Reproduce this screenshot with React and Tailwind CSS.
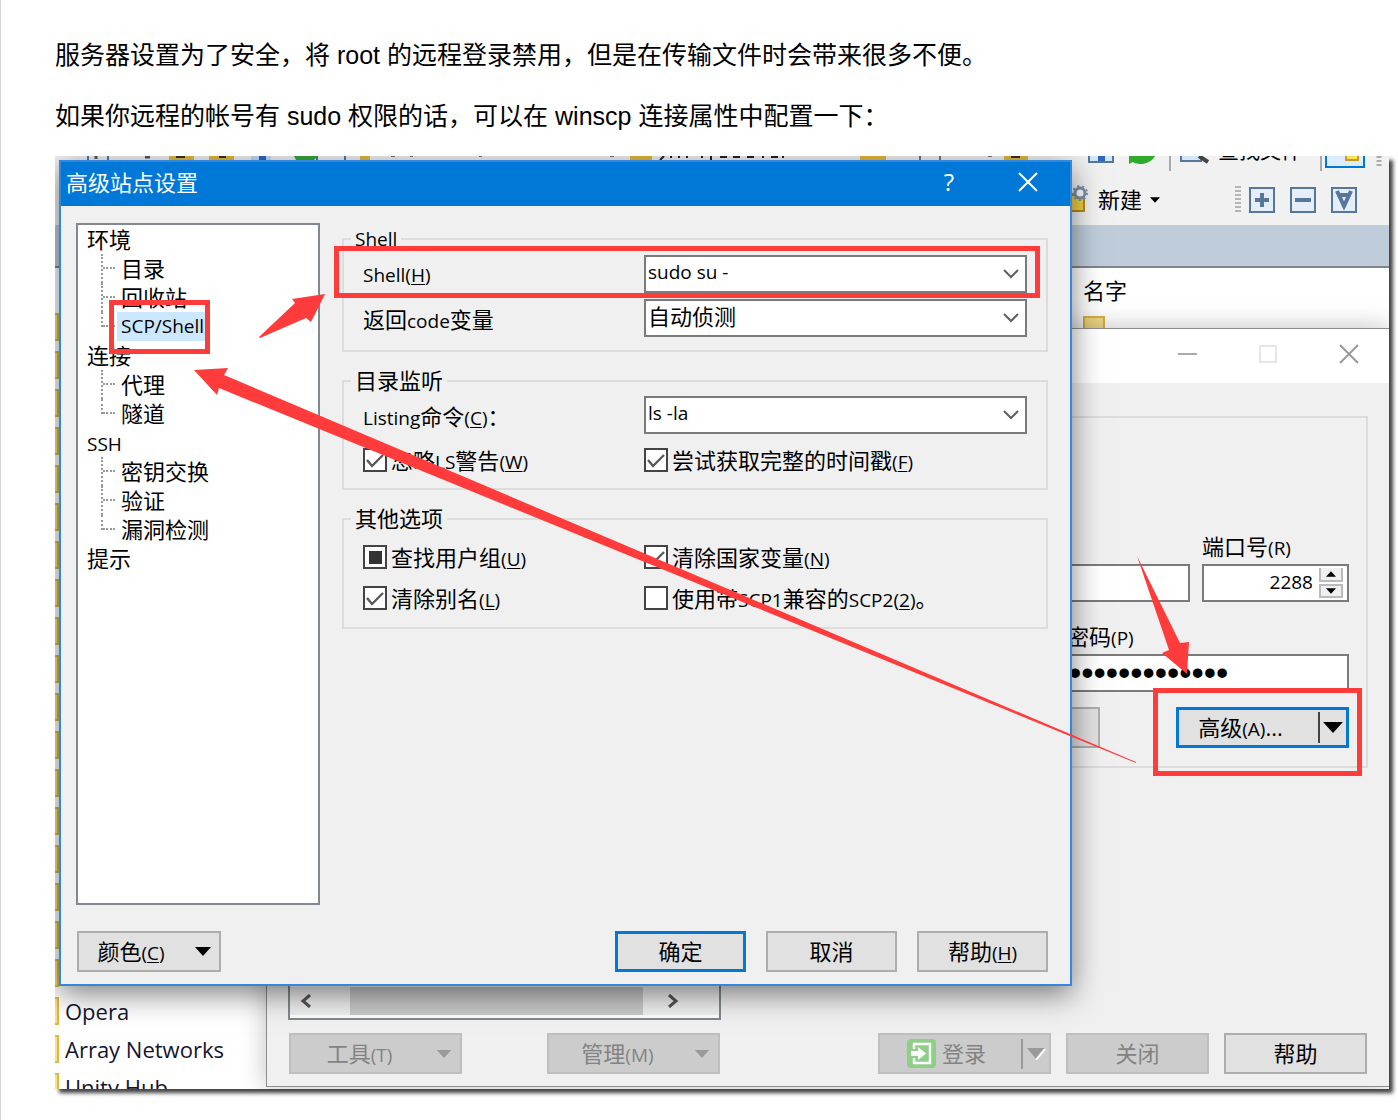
import { useEffect, useRef } from "react"

const tree = [
  { name: "环境", children: ["目录", "回收站", "SCP/Shell"] },
  { name: "连接", children: ["代理", "隧道"] },
  { name: "SSH", children: ["密钥交换", "验证", "漏洞检测"] },
  { name: "提示", children: [] },
]

const files = [...Array(18).fill(""), "Opera", "Array Networks", "Unity Hub"]

// Latin runs are set smaller than the Chinese text around them
function Latin({ children }) {
  return <span className="text-[19px] leading-none">{children}</span>
}

function Key({ letter, underline = true }) {
  return (
    <Latin>
      (<span className={underline ? "underline underline-offset-2" : ""}>{letter}</span>)
    </Latin>
  )
}

function Caret({ className = "" }) {
  return (
    <svg viewBox="0 0 18 10" className={className} fill="currentColor" aria-hidden="true">
      <path d="M0 0h18L9 10z" />
    </svg>
  )
}

function Combo({ id, options, small }) {
  return (
    <div className="grid h-[38px]">
      <select
        id={id}
        className={`col-start-1 row-start-1 appearance-none border-2 border-[#7a7a7a] bg-white pb-1 pl-0.5 leading-7 ${small ? "text-[19px]" : "text-[22px]"}`}
      >
        {options.map((o) => (
          <option key={o}>{o}</option>
        ))}
      </select>
      <svg viewBox="0 0 16 10" className="pointer-events-none col-start-1 row-start-1 mr-2 h-[10px] w-4 self-center justify-self-end" fill="none" stroke="#606060" strokeWidth="2" aria-hidden="true">
        <path d="M1 1l7 7 7-7" />
      </svg>
    </div>
  )
}

function Check({ state, children }) {
  const ref = useRef(null)
  useEffect(() => {
    ref.current.indeterminate = state === "mixed"
  }, [state])

  return (
    <label className="flex h-6 items-center gap-1 whitespace-nowrap leading-6">
      <span className="grid size-6 shrink-0 place-items-center">
        <input
          ref={ref}
          type="checkbox"
          defaultChecked={state === "on"}
          className="col-start-1 row-start-1 size-6 appearance-none border-2 border-[#444] bg-white"
        />
        {state === "on" && (
          <svg viewBox="0 0 20 20" className="pointer-events-none col-start-1 row-start-1 size-5" fill="none" stroke="#5a5a5a" strokeWidth="2.4" aria-hidden="true">
            <path d="M2 10l5 6L18 5" />
          </svg>
        )}
        {state === "mixed" && <span className="pointer-events-none col-start-1 row-start-1 size-[13px] bg-[#333]" />}
      </span>
      <span>{children}</span>
    </label>
  )
}

function Group({ title, className, children }) {
  return (
    <fieldset className={`border-2 border-[#dcdcdc] px-[19px] ${className}`}>
      <legend className="-ml-3 px-1 pb-0.5 leading-5">{title}</legend>
      <div className="grid grid-cols-[281px_1fr]">{children}</div>
    </fieldset>
  )
}

function Button({ className = "w-[131px]", primary, disabled, children }) {
  const look = primary
    ? "border-[3px] border-[#0078d7] bg-[#e1e1e1]"
    : disabled
      ? "border-2 border-[#bfbfbf] bg-[#ccc] text-[#838383]"
      : "border-2 border-[#adadad] bg-[#e1e1e1]"
  return (
    <button disabled={disabled} className={`flex h-[41px] shrink-0 items-center justify-center whitespace-nowrap ${look} ${className}`}>
      {children}
    </button>
  )
}

function ToolIcon({ children }) {
  return (
    <svg viewBox="0 0 26 26" className="size-[26px]" fill="none" stroke="#56779b" strokeWidth="4" aria-hidden="true">
      <rect x="1" y="1" width="24" height="24" fill="#e4eef9" strokeWidth="2" />
      {children}
    </svg>
  )
}

function Toolbars() {
  return (
    <div className="bg-[#f1f1f1]">
      <div className="flex h-[18px] justify-between overflow-hidden">
        {/* lower edges of the icons that show above the dialog */}
        <svg width="1000" height="5" className="shrink" aria-hidden="true">
          <path d="M33 0v4M53 0v4M262 0v4M290 0v4" stroke="#56779b" strokeWidth="2" />
          <path d="M41 0v3M90 1h5" stroke="#555" strokeWidth="3" />
          <path d="M114 0h25v4h-25zM154 0h25v4h-25zM305 0h10v4h-10zM575 0h22v4h-22zM805 0h26v4h-26zM949 0h24v4h-24z" fill="#e6b93a" />
          <path d="M121 0h9v2h-9zM164 0h7v2h-7zM956 0h9v2h-9z" fill="#333" />
          <path d="M196 0h20v4h-20z" fill="#c8dbf2" />
          <path d="M204 0h7v4h-7z" fill="#2d68c4" />
          <path d="M239 0h24l-4 4h-18z" fill="#3aa635" />
          <path d="M605 4l4-4M616 0v2M624 0v2M632 0v2M647 0v2M656 0v4M665 1h7M678 1h7M692 1h7M708 0v2M716 1h7M728 0v2" stroke="#222" strokeWidth="2" />
          <path d="M336 0h4M355 0h3M424 0h3M555 0h4M865 0v4M885 0v4M933 0h4" stroke="#777" strokeWidth="2" />
        </svg>
        <div className="flex w-[317px] shrink-0 items-end">
          <svg width="100" height="18" className="mr-2 shrink-0" aria-hidden="true">
            <path d="M17 0v6h24V0" fill="#d5e6f8" stroke="#56779b" strokeWidth="2" />
            <path d="M26 0h7v5h-7z" fill="#2d68c4" />
            <path d="M57 0h26q-3 6-12 8-8 0-10-2l-4 2z" fill="#2faa2c" />
            <path d="M98 0v15" stroke="#aaa" strokeWidth="2" />
          </svg>
          <svg width="34" height="18" className="mr-1 shrink-0" aria-hidden="true">
            <path d="M1 0v5h20V0" fill="#d5e6f8" stroke="#56779b" strokeWidth="2" />
            <path d="M19 0l9 6" stroke="#444" strokeWidth="4" />
          </svg>
          <span className="h-[34px] shrink-0 text-[21px] leading-none text-black">查找文件</span>
          <svg width="84" height="18" className="shrink-0" aria-hidden="true">
            <path d="M19 0v15" stroke="#aaa" strokeWidth="2" />
            <path d="M24-2v13h38V-2" fill="#dcecfa" stroke="#0078d7" strokeWidth="2" />
            <path d="M44-2v6h12v-6" fill="#ffe14d" stroke="#c8962a" strokeWidth="2" />
            <path d="M77 0v10" stroke="#aaa" strokeWidth="5" strokeDasharray="2 2" />
          </svg>
        </div>
      </div>
      <div className="ml-auto flex h-[51px] w-[317px] items-center pr-8">
        <svg width="18" height="30" aria-hidden="true">
          <path d="M-2 10h14v16H-2z" fill="#f3d045" stroke="#b98a1c" strokeWidth="2" />
          <circle cx="8" cy="8" r="5" fill="#fff" stroke="#7d93ab" strokeWidth="3" />
          <circle cx="8" cy="8" r="7" fill="none" stroke="#7d93ab" strokeWidth="2" strokeDasharray="2 3" />
        </svg>
        <button className="ml-2 flex items-center gap-2">
          新建
          <Caret className="h-[6px] w-[10px]" />
        </button>
        <svg width="6" height="28" className="mr-2 ml-auto" aria-hidden="true">
          <path d="M3 0v28" stroke="#b5b5b5" strokeWidth="6" strokeDasharray="2 2" />
        </svg>
        <div className="flex gap-[15px]">
          <ToolIcon>
            <path d="M13 6v14M6 13h14" />
          </ToolIcon>
          <ToolIcon>
            <path d="M5 13h16" />
          </ToolIcon>
          <ToolIcon>
            <path d="M6 4l7 15 7-15M7 8h12" />
          </ToolIcon>
        </div>
      </div>
    </div>
  )
}

function FileManager() {
  return (
    <div className="col-start-1 row-start-1 flex min-w-0 flex-col bg-white">
      <Toolbars />
      <div className="h-[43px] border-b-2 border-[#80868e] bg-[#bfcddb]" />
      <div className="flex h-0 grow justify-between overflow-hidden">
        <ul className="w-[211px] pt-10">
          {files.map((name, i) => (
            <li key={i} className="flex h-[38px] items-center gap-[6px] whitespace-nowrap text-[22px] text-[#151530]">
              <span className="h-7 w-1 border-y-2 border-r-2 border-[#e0b83c] bg-[#f8e08c]" />
              {name}
            </li>
          ))}
        </ul>
        <div className="w-[317px] pt-2 pl-[11px]">
          <div className="leading-7">名字</div>
          <div className="mt-3 h-7 w-[22px] border-2 border-[#d9b343] bg-[#f3dc86]" />
        </div>
      </div>
    </div>
  )
}

function LoginWindow() {
  return (
    <section className="z-10 col-start-1 row-start-1 mt-[172px] mb-0.5 ml-[211px] flex min-w-0 flex-col border border-r-0 border-[#8c8c8c] bg-[#f0f0f0] shadow-[0_0_24px_rgba(0,0,0,0.25)]">
      <header className="flex h-[54px] items-center justify-end gap-[62px] bg-white pr-[30px] pb-1 text-[#999]">
        <button aria-label="最小化" className="h-[2px] w-[19px] bg-[#aaa]" />
        <button aria-label="最大化" className="size-[18px] border-2 border-[#e6e6e6]" />
        <button aria-label="关闭窗口">
          <svg viewBox="0 0 20 20" className="size-5" stroke="currentColor" strokeWidth="2" aria-hidden="true">
            <path d="M1 1l18 18M19 1L1 19" />
          </svg>
        </button>
      </header>

      <div className="flex gap-5 px-[21px] pt-[33px]">
        {/* site list, only its scrollbar is in view */}
        <div className="flex h-[604px] w-[433px] shrink-0 flex-col justify-end border-2 border-[#828790] bg-white">
          <div className="mb-[3px] flex h-7 items-center bg-[#f0f0f0] pr-[40px] pl-[10px] text-[#555]">
            <svg viewBox="0 0 12 14" className="h-[14px] w-3" fill="none" stroke="currentColor" strokeWidth="3" aria-hidden="true">
              <path d="M10 1L3 7l7 6" />
            </svg>
            <div className="mr-6 ml-[38px] h-7 grow bg-[#c9c9c9]" />
            <svg viewBox="0 0 12 14" className="h-[14px] w-3" fill="none" stroke="currentColor" strokeWidth="3" aria-hidden="true">
              <path d="M2 1l7 6-7 6" />
            </svg>
          </div>
        </div>

        <div className="flex h-[352px] min-w-0 grow flex-col justify-end border-2 border-[#dcdcdc] pr-[17px] pb-[18px]">
          <div className="flex items-end gap-3">
            <input aria-label="主机名" className="h-[38px] w-0 grow border-2 border-[#7a7a7a] bg-white" />
            <div className="w-[147px]">
              <label htmlFor="port" className="flex h-9 items-center leading-6">
                <span>端口号<Key letter="R" underline={false} /></span>
              </label>
              <div className="flex h-[38px] items-center border-2 border-[#7a7a7a] bg-white pr-1">
                <input id="port" defaultValue="2288" className="w-0 grow pr-[6px] pb-0.5 text-right text-[19px]" />
                <div className="flex flex-col gap-0.5">
                  <button aria-label="增加" className="flex h-[14px] w-6 items-center justify-center border-2 border-t-0 border-[#bbb] bg-[#f0f0f0]">
                    <Caret className="h-[6px] w-[10px] rotate-180" />
                  </button>
                  <button aria-label="减少" className="flex h-[14px] w-6 items-center justify-center border-2 border-[#bbb] bg-[#f0f0f0]">
                    <Caret className="h-[6px] w-[10px]" />
                  </button>
                </div>
              </div>
            </div>
          </div>
          <div className="mt-4 ml-auto w-[282px]">
            <label htmlFor="password" className="flex h-9 items-center leading-6">
              <span>密码<Key letter="P" underline={false} /></span>
            </label>
            <input
              id="password"
              type="password"
              defaultValue="xxxxxxxxxxxxx"
              className="h-[38px] w-full border-2 border-[#7a7a7a] bg-white font-['Liberation_Sans',sans-serif] text-[35px] leading-none"
            />
          </div>
          <div className="mt-[14px] flex justify-end gap-[76px]">
            <Button className="w-[132px]" />
            <div className="flex h-[41px] w-[173px] border-[3px] border-[#0078d7] bg-[#e1e1e1]">
              <button className="grow whitespace-nowrap pr-4">
                高级<Key letter="A" underline={false} />...
              </button>
              <button aria-label="高级选项" className="my-0.5 border-l-2 border-[#444] px-[3px]">
                <Caret className="h-[11px] w-5" />
              </button>
            </div>
          </div>
        </div>
      </div>

      <footer className="mt-[13px] flex pr-[22px] pb-3 pl-[22px]">
        <Button disabled className="w-[173px] gap-11 pl-7">
          <span>工具<Key letter="T" underline={false} /></span>
          <Caret className="h-2 w-4 text-[#9a9a9a]" />
        </Button>
        <Button disabled className="mr-auto ml-[85px] w-[173px] gap-10 pl-6">
          <span>管理<Key letter="M" underline={false} /></span>
          <Caret className="h-2 w-4 text-[#9a9a9a]" />
        </Button>
        <div className="flex gap-[15px]">
          <Button disabled className="w-[173px] pl-[27px]">
            <svg viewBox="0 0 29 29" className="mr-[6px] size-[29px]" aria-hidden="true">
              <rect width="29" height="29" rx="4" fill="#8fce86" />
              <path d="M7 10V5h16v19H7v-5" fill="none" stroke="#fff" strokeWidth="2.4" />
              <path d="M4 12h7V8l8 6.500-8 6.500v-4H4z" fill="#fff" />
            </svg>
            登录
            <span className="ml-auto flex h-[30px] items-center border-l-2 border-[#999] pl-1">
              <svg viewBox="0 0 22 12" className="h-3 w-[22px]" aria-hidden="true">
                <path d="M0 0h18L9 11z" fill="#999" />
                <path d="M18 1L9 12" stroke="#fff" strokeWidth="2" />
              </svg>
            </span>
          </Button>
          <Button disabled className="w-[143px]">关闭</Button>
          <Button className="w-[143px]">帮助</Button>
        </div>
      </footer>
    </section>
  )
}

function SettingsTree() {
  return (
    <ul className="h-[682px] w-[244px] shrink-0 border-2 border-[#828790] bg-white pl-[9px] leading-[29px]">
      {tree.map((node) => (
        <li key={node.name}>
          <div className="h-[29px]">{node.name === "SSH" ? <Latin>{node.name}</Latin> : node.name}</div>
          <ul className="pl-[14px]">
            {node.children.map((child, i) => (
              <li key={child} className="flex h-[29px]">
                <span className={`w-0 border-l-2 border-dotted border-[#999] ${i === node.children.length - 1 ? "h-[15px]" : "h-[29px]"}`} />
                <span className="mr-[2px] h-[15px] w-3 border-b-2 border-dotted border-[#999]" />
                {child === "SCP/Shell" ? (
                  <span className="bg-[#cce8ff] px-1 text-[19px]">{child}</span>
                ) : (
                  <span className="px-1">{child}</span>
                )}
              </li>
            ))}
          </ul>
        </li>
      ))}
    </ul>
  )
}

function SettingsDialog() {
  return (
    <section className="z-20 col-start-1 row-start-1 mt-1 mr-[317px] ml-1 min-w-0 self-start border-2 border-[#3388dd] bg-[#f0f0f0] shadow-[0_8px_28px_rgba(0,0,0,0.5)]">
      <header className="flex h-11 items-center bg-[#0078d7] pr-8 pb-1 pl-[5px] text-white">
        <h1 className="mr-auto">高级站点设置</h1>
        <button aria-label="帮助信息" className="mr-16 text-[24px]">?</button>
        <button aria-label="关闭对话框">
          <svg viewBox="0 0 20 20" className="size-5" stroke="currentColor" strokeWidth="2" aria-hidden="true">
            <path d="M1 1l18 18M19 1L1 19" />
          </svg>
        </button>
      </header>

      <div className="flex gap-[22px] pt-[17px] pr-[22px] pl-[15px]">
        <SettingsTree />
        <div className="flex min-w-0 grow flex-col gap-[18px] pt-1">
          <Group title={<Latin>Shell</Latin>} className="pb-[12px]">
            <label htmlFor="shell" className="flex h-[44px] items-center">
              <span><Latin>Shell</Latin><Key letter="H" /></span>
            </label>
            <div className="pt-1"><Combo id="shell" small options={["sudo su -"]} /></div>
            <label htmlFor="code" className="flex h-[43px] items-center pt-[5px]">
              <span>返回<Latin>code</Latin>变量</span>
            </label>
            <div className="pt-1"><Combo id="code" options={["自动侦测"]} /></div>
          </Group>

          <Group title="目录监听" className="pb-4">
            <label htmlFor="listing" className="flex h-[56px] items-center pb-2">
              <span><Latin>Listing</Latin>命令<Key letter="C" />：</span>
            </label>
            <div className="pt-1"><Combo id="listing" small options={["ls -la"]} /></div>
            <Check state="on">忽略<Latin>LS</Latin>警告<Key letter="W" /></Check>
            <Check state="on">尝试获取完整的时间戳<Key letter="F" /></Check>
          </Group>

          <Group title="其他选项" className="pt-[15px] pb-[17px]">
            <div className="pb-[17px]"><Check state="mixed">查找用户组<Key letter="U" /></Check></div>
            <Check state="on">清除国家变量<Key letter="N" /></Check>
            <Check state="on">清除别名<Key letter="L" /></Check>
            <Check state="off">使用带<Latin>SCP1</Latin>兼容的<Latin>SCP2</Latin><Key letter="2" />。</Check>
          </Group>
        </div>
      </div>

      <footer className="mt-[26px] flex gap-5 pr-[22px] pb-3 pl-4">
        <Button className="mr-auto w-[144px] gap-[30px] pl-[10px]">
          <span>颜色<Key letter="C" /></span>
          <Caret className="h-[9px] w-4" />
        </Button>
        <Button primary>确定</Button>
        <Button>取消</Button>
        <Button>
          <span>帮助<Key letter="H" /></span>
        </Button>
      </footer>
    </section>
  )
}

// red boxes and arrows drawn over the windows
function Annotations() {
  return (
    <svg viewBox="55 156 1334 933" preserveAspectRatio="xMinYMin meet" className="pointer-events-none absolute inset-0 z-30 h-full w-full" aria-hidden="true">
      <g fill="none" stroke="#ff3b3b" strokeWidth="5">
        <rect x="111.500" y="302.500" width="96" height="49" />
        <rect x="336.500" y="248.500" width="701" height="47" />
        <rect x="1155.500" y="690.500" width="204" height="83" />
      </g>
      <g fill="#ff3b3b">
        <path d="M194 370l34-2-4 7 912 387v1L219 388l-2 7z" />
        <path d="M259 337l36-34-3-4 33-5-14 28-5-4-46 20z" />
        <path d="M1137 556l43 87 9-1-2 32-25-21 7-3z" />
      </g>
    </svg>
  )
}

export default function App() {
  return (
    <article className="overflow-hidden border-l border-[#d4d4d4] bg-white pb-[31px] pl-[54px] font-['Liberation_Sans','Noto_Sans_CJK_SC',sans-serif] text-[25px] text-black">
      <p className="pt-[37px] leading-9">服务器设置为了安全，将 root 的远程登录禁用，但是在传输文件时会带来很多不便。</p>
      <p className="mt-[25px] mb-[22px] leading-9">如果你远程的帐号有 sudo 权限的话，可以在 winscp 连接属性中配置一下：</p>

      <div className="relative mr-[9px] grid shadow-[4px_4px_4px_rgba(0,0,0,0.75)]">
        <div className="grid grid-cols-1 overflow-hidden font-['Open_Sans','Noto_Sans_CJK_SC',sans-serif] text-[22px]">
          <FileManager />
          <LoginWindow />
          <SettingsDialog />
        </div>
        <Annotations />
      </div>
    </article>
  )
}
